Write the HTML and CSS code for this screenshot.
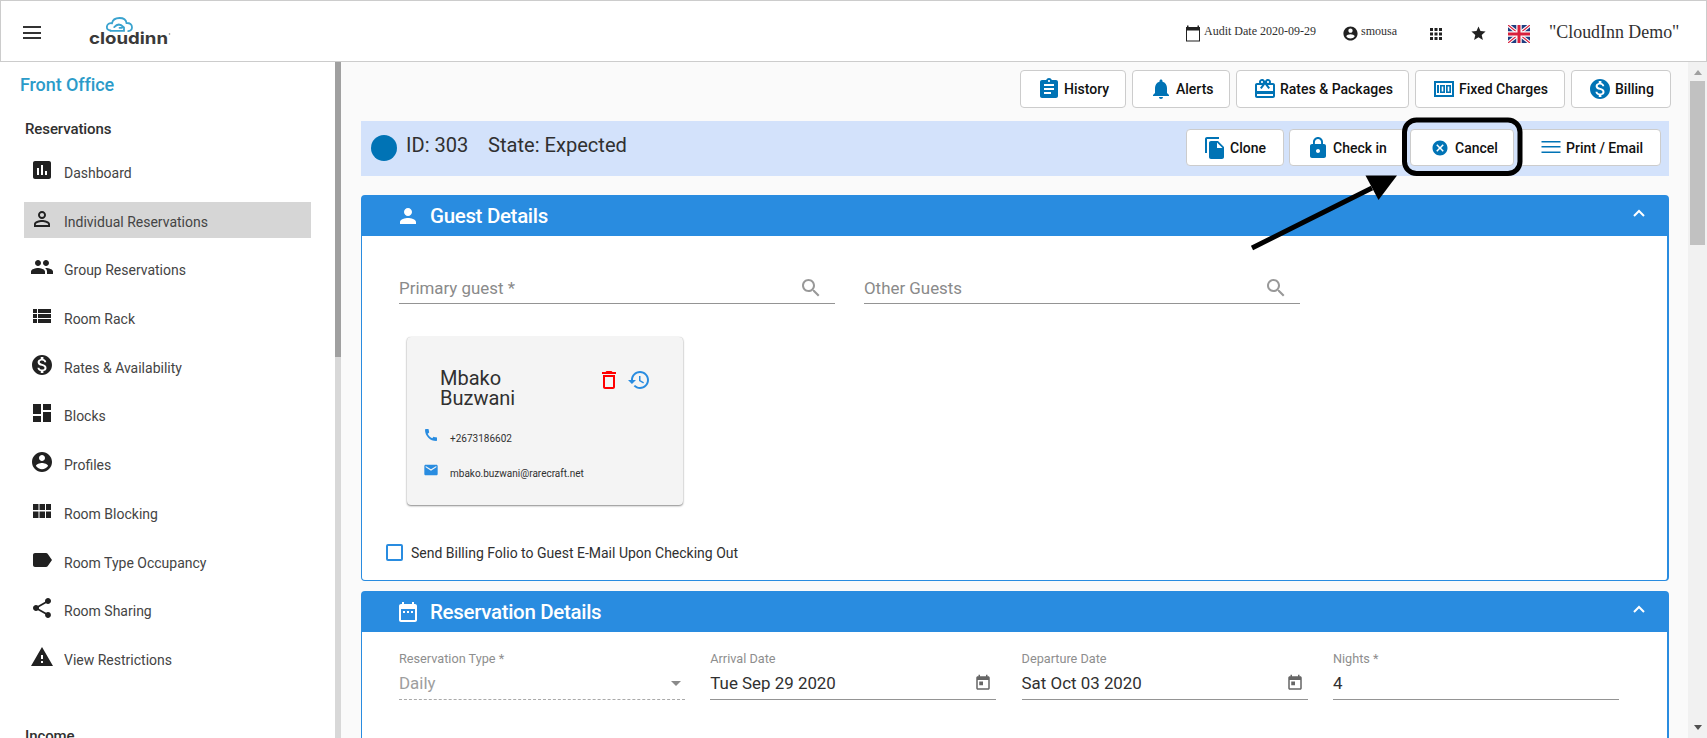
FILE: index.html
```
<!DOCTYPE html>
<html lang="en">
<head>
  <meta charset="UTF-8" />
  <title>CloudInn - Reservation</title>
  <link rel="stylesheet" href="styles.css">
</head>
<body>

  <svg class="sprite" width="0" height="0">
    <symbol id="i-chart" viewBox="0 0 24 24"><path d="M19 3H5c-1.100 0-2 .9-2 2v14c0 1.100.9 2 2 2h14c1.100 0 2-.9 2-2V5c0-1.100-.9-2-2-2zM9 17H7v-7h2v7zm4 0h-2V7h2v10zm4 0h-2v-4h2v4z"/></symbol>
    <symbol id="i-person-o" viewBox="0 0 24 24"><path d="M12 5.900a2.100 2.100 0 1 1 0 4.200 2.100 2.100 0 0 1 0-4.200m0 9c2.970 0 6.100 1.460 6.100 2.100v1.100H5.900V17c0-.64 3.130-2.100 6.100-2.100M12 4C9.790 4 8 5.790 8 8s1.790 4 4 4 4-1.790 4-4-1.790-4-4-4zm0 9c-2.670 0-8 1.340-8 4v3h16v-3c0-2.660-5.330-4-8-4z"/></symbol>
    <symbol id="i-person" viewBox="0 0 24 24"><path d="M12 12c2.210 0 4-1.790 4-4s-1.790-4-4-4-4 1.790-4 4 1.790 4 4 4zm0 2c-2.670 0-8 1.340-8 4v2h16v-2c0-2.660-5.330-4-8-4z"/></symbol>
    <symbol id="i-group" viewBox="0 0 24 24"><path d="M16 11c1.660 0 2.990-1.340 2.990-3S17.660 5 16 5s-3 1.340-3 3 1.340 3 3 3zm-8 0c1.660 0 2.990-1.340 2.990-3S9.660 5 8 5 5 6.340 5 8s1.340 3 3 3zm0 2c-2.330 0-7 1.170-7 3.500V19h14v-2.500C15 14.170 10.330 13 8 13zm8 0c-.29 0-.62.02-.97.05 1.160.84 1.970 1.970 1.970 3.450V19h6v-2.500c0-2.330-4.670-3.500-7-3.500z"/></symbol>
    <symbol id="i-list" viewBox="0 0 24 24"><path d="M3 14h4v-4H3v4zm0 5h4v-4H3v4zM3 9h4V5H3v4zm5 5h13v-4H8v4zm0 5h13v-4H8v4zM8 5v4h13V5H8z"/></symbol>
    <symbol id="i-money" viewBox="0 0 24 24"><path d="M12 2C6.480 2 2 6.480 2 12s4.480 10 10 10 10-4.480 10-10S17.520 2 12 2zm1.410 16.090V20h-2.670v-1.930c-1.710-.36-3.160-1.460-3.270-3.400h1.960c.1 1.050.82 1.870 2.650 1.870 1.960 0 2.400-.98 2.400-1.590 0-.83-.44-1.610-2.670-2.140-2.480-.6-4.180-1.620-4.180-3.670 0-1.720 1.390-2.840 3.110-3.210V4h2.670v1.950c1.860.45 2.790 1.860 2.850 3.390H14.300c-.05-1.110-.64-1.870-2.220-1.870-1.500 0-2.400.68-2.400 1.640 0 .84.65 1.390 2.670 1.910s4.180 1.390 4.180 3.910c-.01 1.830-1.380 2.830-3.120 3.160z"/></symbol>
    <symbol id="i-dash" viewBox="0 0 24 24"><path d="M3 13h8V3H3v10zm0 8h8v-6H3v6zm10 0h8V11h-8v10zm0-18v6h8V3h-8z"/></symbol>
    <symbol id="i-account" viewBox="0 0 24 24"><path d="M12 2C6.480 2 2 6.480 2 12s4.480 10 10 10 10-4.480 10-10S17.520 2 12 2zm0 3c1.660 0 3 1.340 3 3s-1.340 3-3 3-3-1.340-3-3 1.340-3 3-3zm0 14.200c-2.500 0-4.710-1.280-6-3.220.03-1.990 4-3.080 6-3.080 1.990 0 5.970 1.090 6 3.080-1.290 1.940-3.500 3.220-6 3.220z"/></symbol>
    <symbol id="i-module" viewBox="0 0 24 24"><path d="M3 11h5.500V5H3v6zm0 8h5.500v-6.500H3V19zm6.500 0H15v-6.500H9.500V19zm6.500 0h5v-6.500h-5V19zM9.500 11H15V5H9.500v6zM16 5v6h5V5h-5z"/></symbol>
    <symbol id="i-label" viewBox="0 0 24 24"><path d="M17.630 5.840C17.270 5.330 16.670 5 16 5L5 5.010C3.900 5.010 3 5.900 3 7v10c0 1.100.9 1.990 2 1.990L16 19c.67 0 1.270-.33 1.630-.84L22 12l-4.370-6.160z"/></symbol>
    <symbol id="i-share" viewBox="0 0 24 24"><path d="M18 16.080c-.76 0-1.440.3-1.960.77L8.910 12.700c.05-.23.09-.46.09-.7s-.04-.47-.09-.7l7.050-4.110c.54.5 1.250.81 2.040.81 1.660 0 3-1.340 3-3s-1.340-3-3-3-3 1.340-3 3c0 .24.04.47.09.7L8.040 9.810C7.500 9.310 6.790 9 6 9c-1.660 0-3 1.340-3 3s1.340 3 3 3c.79 0 1.500-.31 2.040-.81l7.120 4.160c-.05.21-.08.43-.08.65 0 1.610 1.310 2.920 2.920 2.920s2.920-1.310 2.920-2.920-1.310-2.920-2.920-2.920z"/></symbol>
    <symbol id="i-warning" viewBox="0 0 24 24"><path d="M1 21h22L12 2 1 21zm12-3h-2v-2h2v2zm0-4h-2v-4h2v4z"/></symbol>
    <symbol id="i-clipboard" viewBox="0 0 24 24"><path d="M19 3h-4.180C14.400 1.840 13.300 1 12 1s-2.400.84-2.820 2H5c-1.100 0-2 .9-2 2v14c0 1.100.9 2 2 2h14c1.100 0 2-.9 2-2V5c0-1.100-.9-2-2-2zm-7 0c.55 0 1 .45 1 1s-.45 1-1 1-1-.45-1-1 .45-1 1-1zm2 14H7v-2h7v2zm3-4H7v-2h10v2zm0-4H7V7h10v2z"/></symbol>
    <symbol id="i-bell" viewBox="0 0 24 24"><path d="M12 22c1.100 0 2-.9 2-2h-4c0 1.100.89 2 2 2zm6-6v-5c0-3.070-1.640-5.640-4.500-6.320V4c0-.83-.67-1.500-1.500-1.500s-1.500.67-1.500 1.500v.68C7.630 5.360 6 7.920 6 11v5l-2 2v1h16v-1l-2-2z"/></symbol>
    <symbol id="i-gift" viewBox="0 0 24 24"><path d="M20 6h-2.180c.11-.31.18-.65.18-1 0-1.660-1.340-3-3-3-1.050 0-1.960.54-2.500 1.350l-.5.670-.5-.68C10.960 2.540 10.050 2 9 2 7.340 2 6 3.340 6 5c0 .35.07.69.18 1H4c-1.110 0-1.990.89-1.990 2L2 19c0 1.110.89 2 2 2h16c1.110 0 2-.89 2-2V8c0-1.110-.89-2-2-2zm-5-2c.55 0 1 .45 1 1s-.45 1-1 1-1-.45-1-1 .45-1 1-1zM9 4c.55 0 1 .45 1 1s-.45 1-1 1-1-.45-1-1 .45-1 1-1zm11 15H4v-2h16v2zm0-5H4V8h5.080L7 10.830 8.620 12 12 7.400l3.380 4.600L17 10.830 14.920 8H20v6z"/></symbol>
    <symbol id="i-cash" viewBox="0 0 24 24"><path fill-rule="evenodd" d="M2 4h20v16H2zM4 6v12h16V6zM5 8h2v8H5zM8 8h5v8H8zm1.700 1.600v4.800h1.600V9.600zM14 8h5v8h-5zm1.700 1.600v4.800h1.600V9.600z"/></symbol>
    <symbol id="i-copy" viewBox="0 0 24 24"><path d="M16 1H4c-1.100 0-2 .9-2 2v14h2V3h12V1zm-1 4 6 6v10c0 1.100-.9 2-2 2H7.990C6.890 23 6 22.100 6 21l.01-14c0-1.100.89-2 1.990-2h7zm-1 7h5.500L14 6.500V12z"/></symbol>
    <symbol id="i-lock" viewBox="0 0 24 24"><path d="M18 8h-1V6c0-2.760-2.240-5-5-5S7 3.240 7 6v2H6c-1.100 0-2 .9-2 2v10c0 1.100.9 2 2 2h12c1.100 0 2-.9 2-2V10c0-1.100-.9-2-2-2zm-6 9c-1.100 0-2-.9-2-2s.9-2 2-2 2 .9 2 2-.9 2-2 2zm3.100-9H8.900V6c0-1.710 1.390-3.100 3.100-3.100s3.100 1.390 3.100 3.100v2z"/></symbol>
    <symbol id="i-cancel" viewBox="0 0 24 24"><path d="M12 2C6.470 2 2 6.470 2 12s4.470 10 10 10 10-4.470 10-10S17.530 2 12 2zm5 13.590L15.590 17 12 13.410 8.410 17 7 15.590 10.590 12 7 8.410 8.410 7 12 10.590 15.590 7 17 8.410 13.410 12 17 15.590z"/></symbol>
    <symbol id="i-lines" viewBox="0 0 24 24"><path d="M2.500 5h19v1.500h-19zm0 5h19v1.500h-19zm0 5.500h19V17h-19z"/></symbol>
    <symbol id="i-search" viewBox="0 0 24 24"><path d="M15.500 14h-.79l-.28-.27C15.410 12.590 16 11.110 16 9.500 16 5.910 13.090 3 9.500 3S3 5.910 3 9.500 5.910 16 9.500 16c1.610 0 3.090-.59 4.230-1.570l.27.28v.79l5 4.990L20.490 19l-4.990-5zm-6 0C7.010 14 5 11.990 5 9.500S7.010 5 9.500 5 14 7.010 14 9.500 11.990 14 9.500 14z"/></symbol>
    <symbol id="i-trash" viewBox="0 0 24 24"><path d="M6 19c0 1.100.9 2 2 2h8c1.100 0 2-.9 2-2V7H6v12zM8 9h8v10H8V9zm7.500-5-1-1h-5l-1 1H5v2h14V4z"/></symbol>
    <symbol id="i-history" viewBox="0 0 24 24"><path d="M13 3c-4.970 0-9 4.030-9 9H1l3.890 3.890.07.140L9 12H6c0-3.870 3.130-7 7-7s7 3.130 7 7-3.130 7-7 7c-1.930 0-3.680-.79-4.940-2.060l-1.420 1.420C8.270 19.990 10.510 21 13 21c4.970 0 9-4.030 9-9s-4.030-9-9-9zm-1 5v5l4.280 2.540.72-1.210-3.500-2.080V8H12z"/></symbol>
    <symbol id="i-phone" viewBox="0 0 24 24"><path d="M20.010 15.380c-1.230 0-2.420-.2-3.530-.56-.35-.12-.74-.03-1.010.24l-1.570 1.970c-2.830-1.350-5.480-3.900-6.890-6.830l1.950-1.660c.27-.28.35-.67.24-1.020-.37-1.110-.56-2.300-.56-3.530 0-.54-.45-.99-.99-.99H4.190C3.650 3 3 3.240 3 3.990 3 13.280 10.730 21 20.010 21c.71 0 .99-.63.99-1.180v-3.450c0-.54-.45-.99-.99-.99z"/></symbol>
    <symbol id="i-mail" viewBox="0 0 24 24"><path d="M20 4H4c-1.100 0-1.990.9-1.990 2L2 18c0 1.100.9 2 2 2h16c1.100 0 2-.9 2-2V6c0-1.100-.9-2-2-2zm0 4-8 5-8-5V6l8 5 8-5v2z"/></symbol>
    <symbol id="i-range" viewBox="0 0 24 24"><path d="M9 11H7v2h2v-2zm4 0h-2v2h2v-2zm4 0h-2v2h2v-2zm2-7h-1V2h-2v2H8V2H6v2H5c-1.110 0-1.990.9-1.990 2L3 20c0 1.100.89 2 2 2h14c1.100 0 2-.9 2-2V6c0-1.100-.9-2-2-2zm0 16H5V9h14v11z"/></symbol>
    <symbol id="i-today" viewBox="0 0 24 24"><path d="M19 3h-1V1h-2v2H8V1H6v2H5c-1.110 0-1.990.9-1.990 2L3 19c0 1.100.89 2 2 2h14c1.100 0 2-.9 2-2V5c0-1.100-.9-2-2-2zm0 16H5V8h14v11zM7 10h5v5H7z"/></symbol>
    <symbol id="i-cal" viewBox="0 0 16 18"><path d="M15 3h-1V1.500h-1.500V3h-9V1.500H2V3H1v14.500h14zM14 16.500H2V6.500h12z"/></symbol>
    <symbol id="i-apps" viewBox="0 0 24 24"><path d="M4 8h4V4H4v4zm6 12h4v-4h-4v4zm-6 0h4v-4H4v4zm0-6h4v-4H4v4zm6 0h4v-4h-4v4zm6-10v4h4V4h-4zm-6 4h4V4h-4v4zm6 6h4v-4h-4v4zm0 6h4v-4h-4v4z"/></symbol>
    <symbol id="i-star" viewBox="0 0 24 24"><path d="M12 17.270 18.180 21l-1.640-7.030L22 9.240l-7.190-.61L12 2 9.190 8.630 2 9.240l5.460 4.730L5.820 21z"/></symbol>
  </svg>

  <header class="topbar">
    <div class="burger"><span></span><span></span><span></span></div>
    <svg class="logo" width="84" height="32" viewBox="0 0 84 32">
      <g fill="none" stroke="#3aa3cf" stroke-width="1.800" stroke-linecap="round">
        <path d="M22.500 15.500c-2.600-.4-3.900-2-3.600-4 .4-2.400 2.600-3.700 5.100-3.200C24.600 4.600 27.800 3 31.500 3c4 0 6.600 2 7 5 3.300-.2 5.500 1.500 5.500 4.200 0 2.300-1.500 3.700-3.800 4"/>
        <path d="M22.500 15.800h13.500v-3.300c-1.800-1.800-3.500-3-5.200-3-1.900.1-3.300 1.200-4.600 2.600M31.500 12.800h2.500"/>
      </g>
      <text x="1" y="28.500" textLength="79" lengthAdjust="spacingAndGlyphs">cloudinn</text>
      <circle cx="81.500" cy="19" r=".8" fill="#777"/>
    </svg>
    <div class="top-right">
      <svg class="ic audit-ic"><use href="#i-cal"/></svg>
      <span class="audit">Audit Date 2020-09-29</span>
      <svg class="ic user-ic"><use href="#i-account"/></svg>
      <span class="user">smousa</span>
      <svg class="ic apps-ic"><use href="#i-apps"/></svg>
      <svg class="ic star-ic"><use href="#i-star"/></svg>
      <svg class="flag" viewBox="0 0 22 18">
        <path fill="#1f3d80" d="M0 0h22v18H0z"/>
        <path stroke="#fff" stroke-width="3.400" d="m0 0 22 18M22 0 0 18"/>
        <path stroke="#d8203c" stroke-width="1.200" d="m0 0 22 18M22 0 0 18"/>
        <path stroke="#fff" stroke-width="5.400" d="M11 0v18M0 9h22"/>
        <path stroke="#d8203c" stroke-width="3" d="M11 0v18M0 9h22"/>
      </svg>
      <span class="hotel">"CloudInn Demo"</span>
    </div>
  </header>

  <div class="layout">
    <nav class="sidebar">
      <div class="side-title">Front Office</div>
      <div class="side-group">Reservations</div>
      <a class="side-item"><svg class="ic"><use href="#i-chart"/></svg><span>Dashboard</span></a>
      <a class="side-item active"><svg class="ic"><use href="#i-person-o"/></svg><span>Individual Reservations</span></a>
      <a class="side-item"><svg class="ic"><use href="#i-group"/></svg><span>Group Reservations</span></a>
      <a class="side-item"><svg class="ic"><use href="#i-list"/></svg><span>Room Rack</span></a>
      <a class="side-item"><svg class="ic"><use href="#i-money"/></svg><span>Rates &amp; Availability</span></a>
      <a class="side-item"><svg class="ic"><use href="#i-dash"/></svg><span>Blocks</span></a>
      <a class="side-item"><svg class="ic"><use href="#i-account"/></svg><span>Profiles</span></a>
      <a class="side-item"><svg class="ic"><use href="#i-module"/></svg><span>Room Blocking</span></a>
      <a class="side-item"><svg class="ic"><use href="#i-label"/></svg><span>Room Type Occupancy</span></a>
      <a class="side-item"><svg class="ic"><use href="#i-share"/></svg><span>Room Sharing</span></a>
      <a class="side-item"><svg class="ic"><use href="#i-warning"/></svg><span>View Restrictions</span></a>
      <div class="side-group income">Income</div>
    </nav>
    <div class="side-scroll"><div class="side-thumb"></div></div>

    <main class="content">
      <div class="toolbar">
        <button class="btn w-history"><svg class="ic"><use href="#i-clipboard"/></svg>History</button>
        <button class="btn w-alerts"><svg class="ic"><use href="#i-bell"/></svg>Alerts</button>
        <button class="btn w-rates"><svg class="ic"><use href="#i-gift"/></svg>Rates &amp; Packages</button>
        <button class="btn w-fixed"><svg class="ic"><use href="#i-cash"/></svg>Fixed Charges</button>
        <button class="btn w-billing"><svg class="ic"><use href="#i-money"/></svg>Billing</button>
      </div>

      <div class="statebar">
        <span class="dot"></span>
        <span class="res-id">ID: 303</span>
        <span class="res-state">State: Expected</span>
        <div class="actions">
          <button class="btn w-clone"><svg class="ic"><use href="#i-copy"/></svg>Clone</button>
          <button class="btn w-checkin"><svg class="ic"><use href="#i-lock"/></svg>Check in</button>
          <button class="btn w-cancel"><svg class="ic small"><use href="#i-cancel"/></svg>Cancel</button>
          <button class="btn w-print"><svg class="ic"><use href="#i-lines"/></svg>Print / Email</button>
        </div>
      </div>

      <section class="panel guest">
        <div class="panel-head">
          <svg class="ic"><use href="#i-person"/></svg>
          <h2>Guest Details</h2>
          <svg class="chev" viewBox="0 0 12 8"><path d="m1 7 5-5 5 5"/></svg>
        </div>
        <div class="search-row">
          <div class="search-field"><span>Primary guest *</span><svg class="ic"><use href="#i-search"/></svg></div>
          <div class="search-field"><span>Other Guests</span><svg class="ic"><use href="#i-search"/></svg></div>
        </div>
        <div class="guest-card">
          <div class="guest-top">
            <div class="guest-name">Mbako<br>Buzwani</div>
            <svg class="ic trash"><use href="#i-trash"/></svg>
            <svg class="ic hist"><use href="#i-history"/></svg>
          </div>
          <div class="contact"><svg class="ic"><use href="#i-phone"/></svg><span>+2673186602</span></div>
          <div class="contact"><svg class="ic"><use href="#i-mail"/></svg><span>mbako.buzwani@rarecraft.net</span></div>
        </div>
        <label class="check"><i></i><span>Send Billing Folio to Guest E-Mail Upon Checking Out</span></label>
      </section>

      <section class="panel details">
        <div class="panel-head">
          <svg class="ic"><use href="#i-range"/></svg>
          <h2>Reservation Details</h2>
          <svg class="chev" viewBox="0 0 12 8"><path d="m1 7 5-5 5 5"/></svg>
        </div>
        <div class="fields">
          <div class="field disabled">
            <small>Reservation Type *</small>
            <div class="value">Daily<b class="caret"></b></div>
          </div>
          <div class="field">
            <small>Arrival Date</small>
            <div class="value">Tue Sep 29 2020<svg class="ic"><use href="#i-today"/></svg></div>
          </div>
          <div class="field">
            <small>Departure Date</small>
            <div class="value">Sat Oct 03 2020<svg class="ic"><use href="#i-today"/></svg></div>
          </div>
          <div class="field">
            <small>Nights *</small>
            <div class="value">4</div>
          </div>
        </div>
      </section>
    </main>

    <div class="page-scroll">
      <span class="up"></span>
      <div class="page-thumb"></div>
      <span class="down"></span>
    </div>
  </div>

  <!-- highlight around the Cancel button -->
  <svg class="marker" width="290" height="145" viewBox="0 0 290 145">
    <rect x="164.500" y="10" width="115.500" height="53.500" rx="12" fill="none" stroke="#000" stroke-width="5"/>
    <path d="m12 138 120-60" stroke="#000" stroke-width="4.800"/>
    <path d="M157 65.500h-31.500L138.500 90z"/>
  </svg>

</body>
</html>
```

FILE: styles.css
```
html, body {
  margin: 0;
  padding: 0;
  height: 100%;
  overflow: hidden;
  font-family: Roboto, sans-serif;
  color: #303030;
  background: #fafafa;
}

* {
  box-sizing: border-box;
}

.sprite {
  position: absolute;
}

.ic {
  width: 24px;
  height: 24px;
  fill: currentColor;
  flex: none;
}

/* top bar */
.topbar {
  display: flex;
  align-items: center;
  height: 62px;
  padding-left: 22px;
  background: #fff;
  border: 1px solid #ccc;
}

.burger {
  display: flex;
  flex-direction: column;
  gap: 3.500px;
  width: 18px;
  margin-top: 3px;
}

.burger span {
  height: 2px;
  background: #333;
}

.logo {
  margin-left: 47px;
}

.logo text {
  font-family: Inter, sans-serif;
  font-size: 16.500px;
  font-weight: 700;
  fill: #3a3a3a;
}

.top-right {
  display: flex;
  align-items: center;
  margin-left: auto;
  height: 60px;
  padding-right: 26px;
  font-family: "Liberation Serif", serif;
}

.top-right .ic {
  color: #212121;
}

.top-right .audit-ic {
  width: 16px;
  height: 18px;
  margin-top: 4px;
}

.audit, .user {
  font-size: 12px;
}

.audit {
  width: 111px;
  margin-left: 3px;
  white-space: nowrap;
}

.user-ic {
  width: 17px;
  height: 17px;
  margin: 5px 0 0 27px;
}

.user {
  width: 36px;
  margin-left: 2px;
}

.apps-ic {
  width: 18px;
  height: 18px;
  margin: 5px 0 0 30px;
}

.star-ic {
  width: 17px;
  height: 17px;
  margin: 4px 0 0 25px;
}

.flag {
  width: 22px;
  height: 18px;
  margin: 5px 0 0 21px;
}

.hotel {
  width: 131px;
  margin-left: 19px;
  font-size: 17.900px;
  white-space: nowrap;
  margin-top: 3px;
}

.layout {
  display: flex;
  height: 676px;
}

/* sidebar */
.sidebar {
  width: 335px;
  padding: 12px 24px 0;
  background: #fff;
  overflow: hidden;
}

.side-title {
  margin-left: -4px;
  font-size: 18px;
  font-weight: 500;
  line-height: 22px;
  letter-spacing: -.1px;
  color: #2b9bc9;
}

.side-group {
  margin: 23px 0 14px 1px;
  font-size: 15px;
  font-weight: 500;
  line-height: 20px;
  letter-spacing: -.1px;
}

.side-item {
  display: flex;
  align-items: center;
  height: 36px;
  margin-bottom: 12.700px;
  padding: 4px 0 0 6px;
  font-size: 14px;
  color: #444;
}

.side-item .ic {
  margin: -6px 10px 0 0;
  color: #212121;
}

.side-item.active {
  background: #d6d6d6;
}

.income {
  margin-top: 50px;
}

.side-scroll {
  width: 6px;
  background: #d8d8d8;
}

.side-thumb {
  height: 295px;
  background: #a0a0a0;
}

/* main column */
.content {
  flex: 1;
  padding: 8px 19px 0 20px;
  overflow: hidden;
}

.toolbar {
  display: flex;
  justify-content: flex-end;
  gap: 6px;
  margin-right: -2px;
}

.btn {
  display: flex;
  align-items: center;
  gap: 3px;
  height: 38px;
  padding: 0 0 0 16px;
  font-family: Roboto, sans-serif;
  font-size: 14px;
  font-weight: 500;
  color: #111;
  white-space: nowrap;
  background: #fff;
  border: 1px solid #ccc;
  border-radius: 4px;
}

.btn .ic {
  color: #0073b5;
}

.btn .small {
  width: 18px;
  height: 18px;
}

.w-history { width: 106px; }
.w-alerts { width: 98px; }
.w-rates { width: 173px; }
.w-fixed { width: 150px; }
.w-billing { width: 100px; }
.w-clone { width: 98px; }
.w-checkin { width: 116px; }
.w-cancel { width: 104px; padding-left: 20px; gap: 6px; }
.w-print { width: 142px; padding-left: 19px; }

.statebar {
  display: flex;
  height: 55px;
  margin-top: 13px;
  padding: 8px 8px 0 10px;
  background: #d3e2fb;
  font-size: 20.100px;
}

.dot {
  width: 26px;
  height: 26px;
  margin-top: 6px;
  border-radius: 50%;
  background: #0073b5;
}

.res-id {
  width: 82px;
  margin: 4px 0 0 9px;
}

.res-state {
  margin-top: 4px;
}

.actions {
  display: flex;
  gap: 5px;
  margin-left: auto;
}

.actions .btn {
  height: 37px;
}

/* panels */
.panel {
  border: 1px solid #298ce0;
  border-right-width: 2px;
  border-radius: 4px;
  background: #fff;
}

.guest {
  height: 386px;
  margin-top: 19px;
}

.details {
  height: 300px;
  margin-top: 10px;
}

.panel-head {
  display: flex;
  align-items: center;
  height: 40px;
  padding: 0 22px 0 34px;
  background: #298ce0;
  color: #fff;
}

.panel-head h2 {
  margin: 0 0 0 10px;
  font-size: 20.500px;
  font-weight: 500;
  letter-spacing: -.32px;
}

.chev {
  width: 12px;
  height: 8px;
  margin: -6px 0 0 auto;
  fill: none;
  stroke: #fff;
  stroke-width: 2;
}

.search-row {
  display: flex;
  gap: 29px;
  padding: 37px 37px 0;
}

.search-field {
  display: flex;
  align-items: center;
  justify-content: space-between;
  width: 436px;
  height: 31px;
  padding: 0 12px 1px 0;
  font-size: 16.900px;
  color: #8a8a8a;
  border-bottom: 1px solid #949494;
}

.search-field .ic {
  color: #999;
}

.guest-card {
  width: 276px;
  height: 168px;
  margin: 33px 0 0 45px;
  padding: 31px 17px 0;
  background: #f4f4f4;
  border-radius: 4px;
  box-shadow: 0 1px 2px rgba(0, 0, 0, .45), 0 0 1px rgba(0, 0, 0, .2);
}

.guest-top {
  display: flex;
  padding-left: 16px;
}

.guest-name {
  width: 157px;
  font-size: 20px;
  line-height: 20px;
}

.trash {
  color: #f00;
}

.hist {
  margin-left: 6px;
  color: #298ce0;
}

.contact {
  display: flex;
  height: 35px;
  font-size: 10px;
}

.contact .ic {
  width: 16px;
  height: 16px;
  margin: 19px 11px 0 -1px;
  color: #298ce0;
}

.contact span {
  margin-top: 25px;
}

.check {
  display: flex;
  align-items: center;
  gap: 8px;
  margin: 39px 0 0 24px;
  font-size: 14px;
}

.check i {
  width: 17px;
  height: 17px;
  border: 2px solid #298ce0;
  border-radius: 2px;
}

.fields {
  display: flex;
  gap: 25.300px;
  padding: 19px 37px 0;
}

.field {
  width: 286px;
  border-bottom: 1px solid #949494;
  height: 49px;
}

.field small {
  display: block;
  font-size: 12.700px;
  line-height: 16px;
  color: #8e8e8e;
}

.value {
  display: flex;
  align-items: center;
  justify-content: space-between;
  height: 32px;
  padding-right: 4px;
  font-size: 16.900px;
}

.value .ic {
  width: 18px;
  height: 18px;
  color: #666;
}

.disabled {
  border-bottom: 1px dashed #aaa;
}

.disabled .value {
  color: #9e9e9e;
}

.caret {
  border: 5px solid transparent;
  border-top-color: #8a8a8a;
  border-bottom: 0;
}

/* right scrollbar */
.page-scroll {
  display: flex;
  flex-direction: column;
  align-items: center;
  width: 19px;
  padding: 8px 0 8px;
  background: #f1f1f1;
}

.up {
  border: 4px solid transparent;
  border-bottom: 5px solid #a0a0a0;
  border-top: 0;
}

.page-thumb {
  width: 15px;
  height: 164px;
  margin-top: 6px;
  background: #c1c1c1;
}

.down {
  margin-top: auto;
  border: 4px solid transparent;
  border-top: 5px solid #505050;
  border-bottom: 0;
}

.marker {
  position: absolute;
  left: 1240px;
  top: 110px;
}
```
